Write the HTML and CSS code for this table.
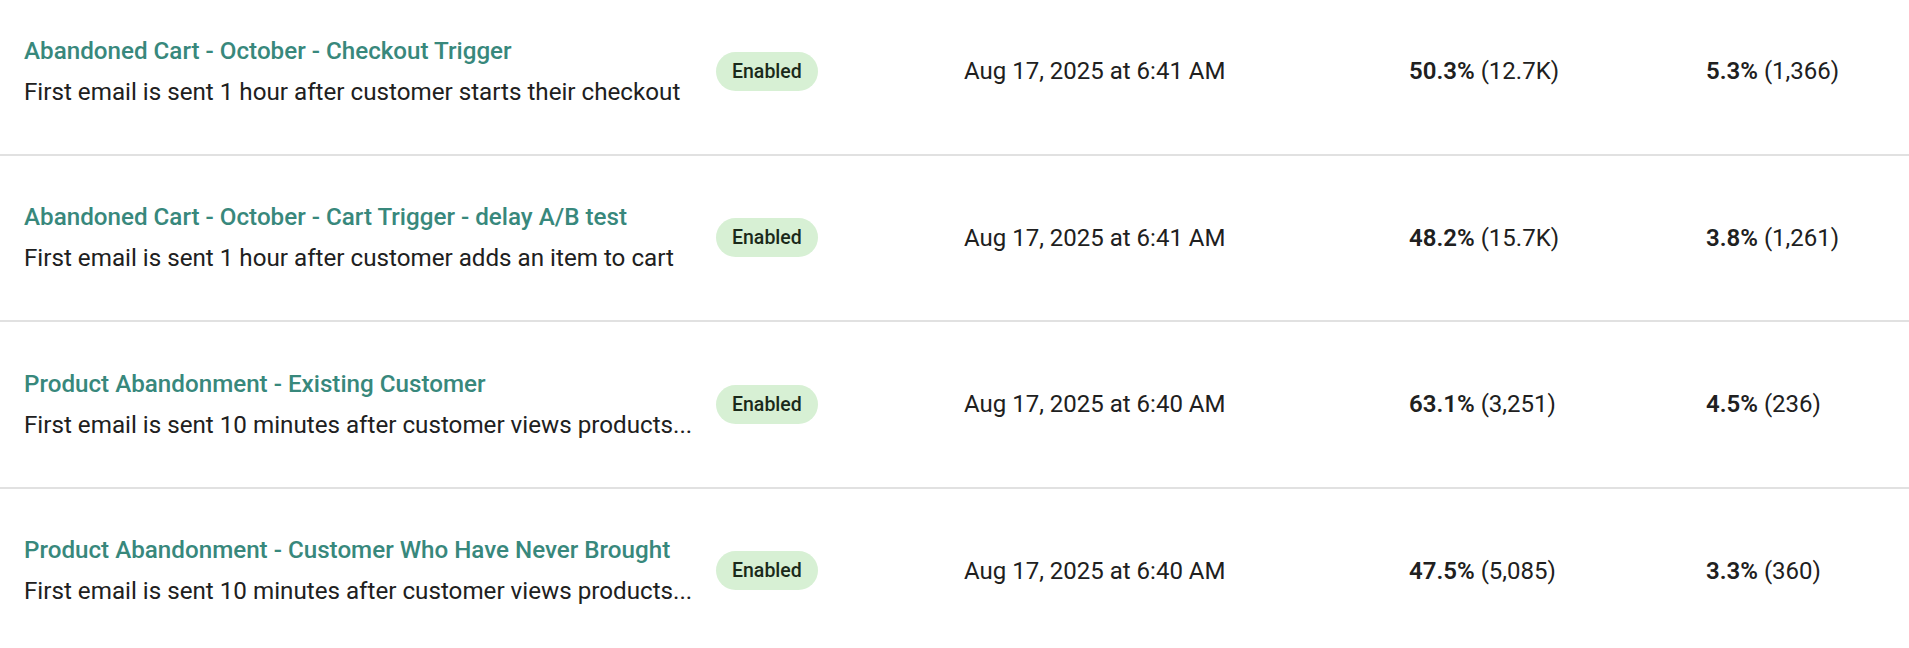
FILE: index.html
```html
<!DOCTYPE html>
<html lang="en">
<head>
<meta charset="utf-8">
<title>Flows</title>
<link rel="stylesheet" href="styles.css">
</head>
<body>
<div class="flow-table">
  <div class="flow-row">
    <div class="flow-name">
      <a class="flow-title" href="#">Abandoned Cart - October - Checkout Trigger</a>
      <div class="flow-desc">First email is sent 1 hour after customer starts their checkout</div>
    </div>
    <div class="flow-status"><span class="badge">Enabled</span></div>
    <div class="flow-date">Aug 17, 2025 at 6:41 AM</div>
    <div class="flow-metric"><b>50.3%</b> (12.7K)</div>
    <div class="flow-metric"><b>5.3%</b> (1,366)</div>
  </div>
  <div class="flow-row">
    <div class="flow-name">
      <a class="flow-title" href="#">Abandoned Cart - October - Cart Trigger - delay A/B test</a>
      <div class="flow-desc">First email is sent 1 hour after customer adds an item to cart</div>
    </div>
    <div class="flow-status"><span class="badge">Enabled</span></div>
    <div class="flow-date">Aug 17, 2025 at 6:41 AM</div>
    <div class="flow-metric"><b>48.2%</b> (15.7K)</div>
    <div class="flow-metric"><b>3.8%</b> (1,261)</div>
  </div>
  <div class="flow-row">
    <div class="flow-name">
      <a class="flow-title" href="#">Product Abandonment - Existing Customer</a>
      <div class="flow-desc">First email is sent 10 minutes after customer views products...</div>
    </div>
    <div class="flow-status"><span class="badge">Enabled</span></div>
    <div class="flow-date">Aug 17, 2025 at 6:40 AM</div>
    <div class="flow-metric"><b>63.1%</b> (3,251)</div>
    <div class="flow-metric"><b>4.5%</b> (236)</div>
  </div>
  <div class="flow-row">
    <div class="flow-name">
      <a class="flow-title" href="#">Product Abandonment - Customer Who Have Never Brought</a>
      <div class="flow-desc">First email is sent 10 minutes after customer views products...</div>
    </div>
    <div class="flow-status"><span class="badge">Enabled</span></div>
    <div class="flow-date">Aug 17, 2025 at 6:40 AM</div>
    <div class="flow-metric"><b>47.5%</b> (5,085)</div>
    <div class="flow-metric"><b>3.3%</b> (360)</div>
  </div>
</div>
</body>
</html>
```
FILE: styles.css
```css
html, body {
  margin: 0;
  padding: 0;
  background: #ffffff;
}

body {
  font-family: Roboto, "Noto Sans", "Liberation Sans", sans-serif;
  color: #202020;
  font-size: 24px;
  overflow: hidden;
}

.flow-table {
  margin-top: -11px;
}

.flow-row {
  box-sizing: border-box;
  height: 166.5px;
  display: grid;
  grid-template-columns: 692px 248px 445px 297px 1fr;
  align-items: center;
  padding-left: 24px;
  border-bottom: 2px solid #e1e1e1;
}

.flow-name {
  min-width: 0;
  padding-right: 16px;
  display: flex;
  flex-direction: column;
  gap: 9px;
}

.flow-title {
  display: block;
  font-weight: 500;
  font-size: 24.2px;
  line-height: 32px;
  color: #38887c;
  text-decoration: none;
  white-space: nowrap;
}

.flow-desc {
  font-size: 24.2px;
  line-height: 32px;
  white-space: nowrap;
  overflow: hidden;
  color: #202020;
}

.flow-status {
  display: flex;
  align-items: center;
}

.badge {
  display: inline-block;
  height: 39px;
  line-height: 39px;
  padding: 0 16px;
  border-radius: 20px;
  background: #d7f0d4;
  color: #1a291a;
  font-size: 19.5px;
  font-weight: 500;
}

.flow-date {
  line-height: 32px;
  white-space: nowrap;
}

.flow-metric {
  line-height: 32px;
  white-space: nowrap;
}

.flow-metric b {
  font-weight: 600;
}
```
